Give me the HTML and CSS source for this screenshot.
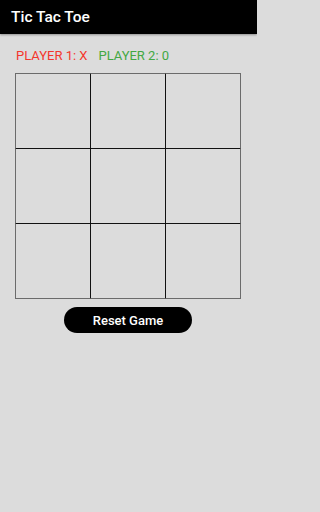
FILE: index.html
```html
<!DOCTYPE html>
<html>
<head>
<meta charset="utf-8">
<link rel="stylesheet" href="styles.css">
</head>
<body>
<header class="appbar"><span class="title">Tic Tac Toe</span></header>
<main class="content">
  <div class="players">
    <span class="p1">PLAYER 1: X</span>
    <span class="p2">PLAYER 2: 0</span>
  </div>
  <div class="board">
    <div class="cell"></div><div class="cell"></div><div class="cell"></div>
    <div class="cell"></div><div class="cell"></div><div class="cell"></div>
    <div class="cell"></div><div class="cell"></div><div class="cell"></div>
  </div>
  <button class="reset">Reset Game</button>
</main>
</body>
</html>
```
FILE: styles.css
```css
html, body {
  margin: 0;
  padding: 0;
  background: #dcdcdc;
  font-family: Roboto, "Liberation Sans", sans-serif;
}
body {
  width: 257px;
  height: 512px;
  overflow: hidden;
}
.appbar {
  height: 34px;
  background: #000;
  display: flex;
  align-items: center;
  padding-left: 11px;
  box-shadow: 0 1px 2px rgba(0,0,0,0.35);
}
.title {
  color: #fff;
  font-size: 15.5px;
  font-weight: 500;
  line-height: 34px;
}
.content {
  display: flex;
  flex-direction: column;
  padding: 14px 0 0 15px;
}
.players {
  display: flex;
  gap: 11px;
  font-size: 13px;
  line-height: 15px;
  padding-left: 1px;
}
.p1 { color: #f4362c; }
.p2 { color: #43a843; }
.board {
  margin-top: 10px;
  width: 224px;
  height: 224px;
  display: grid;
  grid-template-columns: repeat(3, 74px);
  grid-template-rows: repeat(3, 74px);
  gap: 1px;
  background: #1e1e1e;
  border: 1px solid #8a8a8a;
}
.cell {
  background: #dcdcdc;
  box-shadow: 0 0 0 1px rgba(0, 0, 0, 0.22);
}
.reset {
  align-self: flex-start;
  margin: 8px 0 0 49px;
  width: 128px;
  height: 26px;
  border: none;
  border-radius: 13px;
  background: #000;
  color: #fff;
  font-family: Roboto, "Liberation Sans", sans-serif;
  font-size: 13px;
  font-weight: 500;
  padding: 0;
}
```
